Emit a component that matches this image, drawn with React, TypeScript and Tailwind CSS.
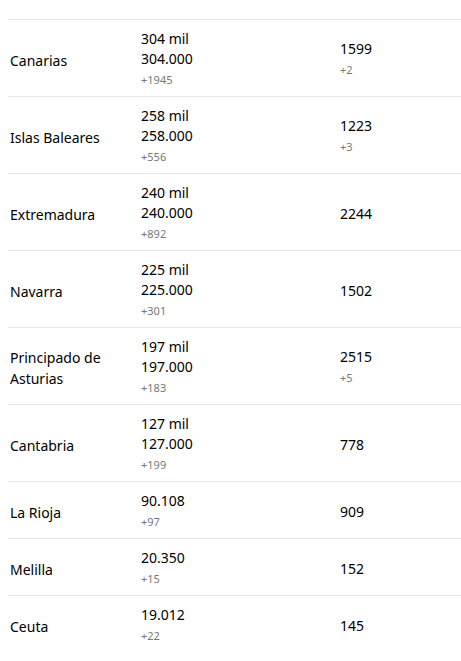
import React from "react";

type Row = {
  name: string;
  short?: string;
  total: string;
  delta: string;
  deaths: string;
  deathsDelta?: string;
};

const rows: Row[] = [
  { name: "Canarias", short: "304 mil", total: "304.000", delta: "+1945", deaths: "1599", deathsDelta: "+2" },
  { name: "Islas Baleares", short: "258 mil", total: "258.000", delta: "+556", deaths: "1223", deathsDelta: "+3" },
  { name: "Extremadura", short: "240 mil", total: "240.000", delta: "+892", deaths: "2244" },
  { name: "Navarra", short: "225 mil", total: "225.000", delta: "+301", deaths: "1502" },
  { name: "Principado de Asturias", short: "197 mil", total: "197.000", delta: "+183", deaths: "2515", deathsDelta: "+5" },
  { name: "Cantabria", short: "127 mil", total: "127.000", delta: "+199", deaths: "778" },
  { name: "La Rioja", total: "90.108", delta: "+97", deaths: "909" },
  { name: "Melilla", total: "20.350", delta: "+15", deaths: "152" },
  { name: "Ceuta", total: "19.012", delta: "+22", deaths: "145" },
];

const RegionRow: React.FC<{ row: Row }> = ({ row }) => {
  return (
    <div className="grid grid-cols-[133px_199px_1fr] border-t border-[#e6e6e6]">
      <div className="flex items-center pl-[2px] pt-[9px] pb-[5px]">
        <span className="w-[120px] leading-[21px]">{row.name}</span>
      </div>
      <div className="flex flex-col pt-[9px] pb-[5px]">
        {row.short ? <span className="leading-[20px]">{row.short}</span> : null}
        <span className="leading-[20px]">{row.total}</span>
        <span className="text-[11px] leading-[22px] text-[#777]">{row.delta}</span>
      </div>
      <div className="flex flex-col justify-center pt-[9px] pb-[5px]">
        <span className="leading-[20px]">{row.deaths}</span>
        {row.deathsDelta ? (
          <span className="text-[11px] leading-[22px] text-[#777]">{row.deathsDelta}</span>
        ) : null}
      </div>
    </div>
  );
};

export default function App() {
  return (
    <div
      className="min-h-screen bg-white pt-[19px] pl-[8px] text-[14px] text-black"
      style={{ fontFamily: '"Noto Sans", "Open Sans", sans-serif' }}
    >
      {rows.map((r) => (
        <RegionRow key={r.name} row={r} />
      ))}
    </div>
  );
}
